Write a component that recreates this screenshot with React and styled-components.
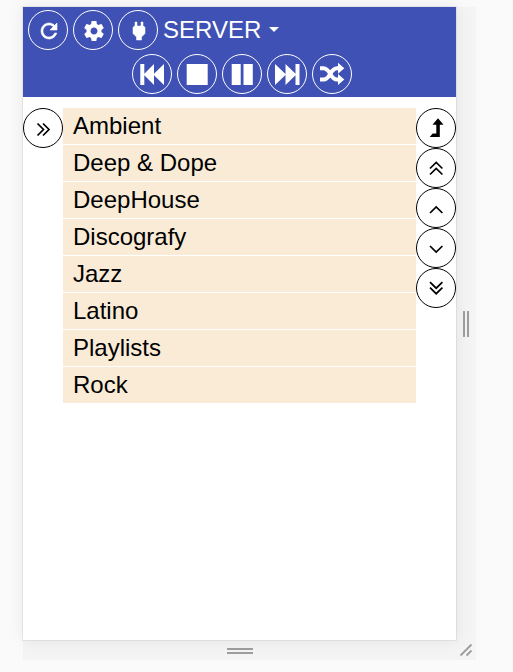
import React from "react";
import styled, { createGlobalStyle } from "styled-components";

const GlobalStyle = createGlobalStyle`
  * { box-sizing: border-box; }
  body {
    margin: 0;
    background: #fafafa;
    overflow: hidden;
    font-family: Arial, "Liberation Sans", sans-serif;
  }
`;

const Stage = styled.div`
  display: grid;
  grid-template-columns: 433px 20px;
  grid-template-rows: 633px 20px;
  padding: 7px 0 0 23px;
  height: 672px;
  align-content: start;
`;

const Device = styled.main`
  position: relative;
  z-index: 1;
  background: #fff;
  box-shadow: 0 0 0 1px rgba(0, 0, 0, 0.06), 0 0 16px rgba(0, 0, 0, 0.08);
`;

const Handle = styled.div`
  display: flex;
  align-items: center;
  justify-content: center;
  background: #f4f4f4;
`;

const Header = styled.header`
  height: 90px;
  padding: 3px 0 0 5px;
  background: #3f51b5;
  color: #fff;
`;

const HeaderRow = styled.div`
  display: flex;
  gap: 5px;
  height: 44px;
  justify-content: ${(p) => (p.$centered ? "center" : "flex-start")};
`;

const RoundButton = styled.button`
  flex: none;
  width: 40px;
  height: 40px;
  padding: 0;
  border: 1px solid currentColor;
  border-radius: 50%;
  background: transparent;
  color: ${(p) => (p.$dark ? "#000" : "#fff")};
`;

const Glyph = styled.svg`
  display: block;
  width: 40px;
  height: 40px;
  margin: -1px;
`;

const ServerMenu = styled.div`
  display: flex;
  align-items: center;
  height: 40px;
  font-size: 24px;
  line-height: 40px;
`;

const Caret = styled.span`
  margin: -1px 0 0 8px;
  border: 5px solid transparent;
  border-top-color: #fff;
  border-bottom: 0;
`;

const Browser = styled.section`
  display: grid;
  grid-template-columns: 40px 1fr 40px;
  align-items: start;
  padding-top: 11px;
`;

const FolderList = styled.ul`
  display: grid;
  gap: 1px;
  margin: 0;
  padding: 0;
  list-style: none;
`;

const Folder = styled.li`
  height: 36px;
  padding-left: 10px;
  background: #faebd7;
  color: #000;
  font-size: 24px;
  line-height: 36px;
`;

const ScrollButtons = styled.nav`
  display: flex;
  flex-direction: column;
`;

const line = { fill: "none", stroke: "currentColor", strokeWidth: 1.7 };

const icons = {
  refresh: (
    <path
      transform="translate(9 9)"
      stroke="currentColor"
      strokeWidth=".6"
      d="M17.65 6.35C16.2 4.9 14.21 4 12 4c-4.42 0-7.99 3.58-7.99 8s3.57 8 7.99 8c3.73 0 6.84-2.55 7.73-6h-2.08c-.82 2.33-3.04 4-5.65 4-3.31 0-6-2.69-6-6s2.69-6 6-6c1.66 0 3.14.69 4.22 1.78L13 11h7V4l-2.35 2.35z"
    />
  ),
  settings: (
    <path
      transform="translate(9 9)"
      d="M19.43 12.98c.04-.32.07-.64.07-.98s-.03-.66-.07-.98l2.11-1.65c.19-.15.24-.42.12-.64l-2-3.46c-.12-.22-.39-.3-.61-.22l-2.49 1c-.52-.4-1.08-.73-1.69-.98l-.38-2.65C14.46 2.18 14.25 2 14 2h-4c-.25 0-.46.18-.49.42l-.38 2.65c-.61.25-1.17.59-1.69.98l-2.49-1c-.23-.09-.49 0-.61.22l-2 3.46c-.13.22-.07.49.12.64l2.11 1.65c-.04.32-.07.65-.07.98s.03.66.07.98l-2.11 1.65c-.19.15-.24.42-.12.64l2 3.46c.12.22.39.3.61.22l2.49-1c.52.4 1.08.73 1.69.98l.38 2.65c.03.24.24.42.49.42h4c.25 0 .46-.18.49-.42l.38-2.65c.61-.25 1.17-.59 1.69-.98l2.49 1c.23.09.49 0 .61-.22l2-3.46c.12-.22.07-.49-.12-.64l-2.11-1.65zM12 15.5c-1.93 0-3.5-1.57-3.5-3.5s1.57-3.5 3.5-3.5 3.5 1.57 3.5 3.5-1.57 3.5-3.5 3.5z"
    />
  ),
  power: (
    <path
      transform="translate(9 9)"
      stroke="currentColor"
      strokeWidth=".5"
      d="M16.01 7L16 3h-2v4h-4V3H8v4h-.01C7 6.99 6 7.99 6 8.99v5.49L9.5 18v3h5v-3l3.5-3.51v-5.5c0-1-1-2-1.99-1.99z"
    />
  ),
  previous: <path d="M8.300 10h4v9.800L22 10v9.800L32 10v21L22 21.200V31l-9.700-9.800V31h-4z" />,
  stop: <path d="M9.700 10h21v21h-21z" />,
  pause: <path d="M9.700 10h9v21h-9zM21.500 10h9.300v21h-9.300z" />,
  next: <path d="M8 10l10.500 10V10l10 9.800V10h4v21h-4v-9.800L18.500 31V21L8 31z" />,
  shuffle: (
    <>
      <path
        d="M8 14.300h3.500C18.500 14.300 18 25.500 25 25.500h2M8 25.500h3.500C18.500 25.500 18 14.300 25 14.300h2"
        fill="none"
        stroke="currentColor"
        strokeWidth="4"
      />
      <path d="M26 8.700l6.300 5.600L26 19.700zM26 20l6.300 5.500L26 31z" />
    </>
  ),
  expand: <path d="M14.500 15.500l6 6-6 6M20 15.500l6 6-6 6" {...line} />,
  levelUp: <path d="M22 10.300l5.500 6.400h-3.700V29H13.700l3-3.500h3.600v-8.800h-3.800z" />,
  pageUp: <path d="M14 20.500l6.200-6 6.200 6M14 26.500l6.200-6 6.200 6" {...line} />,
  up: <path d="M14 25l6.200-6 6.200 6" {...line} />,
  down: <path d="M14 18l6.200 6 6.200-6" {...line} />,
  pageDown: <path d="M14 14.200l6.200 6 6.200-6M14 19.700l6.200 6 6.200-6" {...line} />,
};

const topActions = ["refresh", "settings", "power"];
const playback = ["previous", "stop", "pause", "next", "shuffle"];
const scrolling = ["levelUp", "pageUp", "up", "down", "pageDown"];
const folders = ["Ambient", "Deep & Dope", "DeepHouse", "Discografy", "Jazz", "Latino", "Playlists", "Rock"];

function IconButton({ name, dark }) {
  return (
    <RoundButton $dark={dark} aria-label={name}>
      <Glyph viewBox="0 0 40 40" fill="currentColor">
        {icons[name]}
      </Glyph>
    </RoundButton>
  );
}

export default function App() {
  return (
    <>
      <GlobalStyle />
      <Stage>
        <Device>
          <Header>
            <HeaderRow>
              {topActions.map((name) => (
                <IconButton key={name} name={name} />
              ))}
              <ServerMenu>
                SERVER
                <Caret />
              </ServerMenu>
            </HeaderRow>
            <HeaderRow $centered>
              {playback.map((name) => (
                <IconButton key={name} name={name} />
              ))}
            </HeaderRow>
          </Header>
          <Browser>
            <IconButton name="expand" dark />
            <FolderList>
              {folders.map((name) => (
                <Folder key={name}>{name}</Folder>
              ))}
            </FolderList>
            <ScrollButtons>
              {scrolling.map((name) => (
                <IconButton key={name} name={name} dark />
              ))}
            </ScrollButtons>
          </Browser>
        </Device>
        <Handle>
          <svg width="20" height="26" fill="#9e9e9e">
            <path d="M7 0h2v26H7zM11 0h2v26h-2z" />
          </svg>
        </Handle>
        <Handle>
          <svg width="26" height="20" fill="#9e9e9e">
            <path d="M0 8h26v2H0zM0 12h26v2H0z" />
          </svg>
        </Handle>
        <Handle>
          <svg width="20" height="20" fill="none" stroke="#9e9e9e" strokeWidth="1.800">
            <path d="M4.500 15.500l11-11M10.500 15.500l5-5" />
          </svg>
        </Handle>
      </Stage>
    </>
  );
}
